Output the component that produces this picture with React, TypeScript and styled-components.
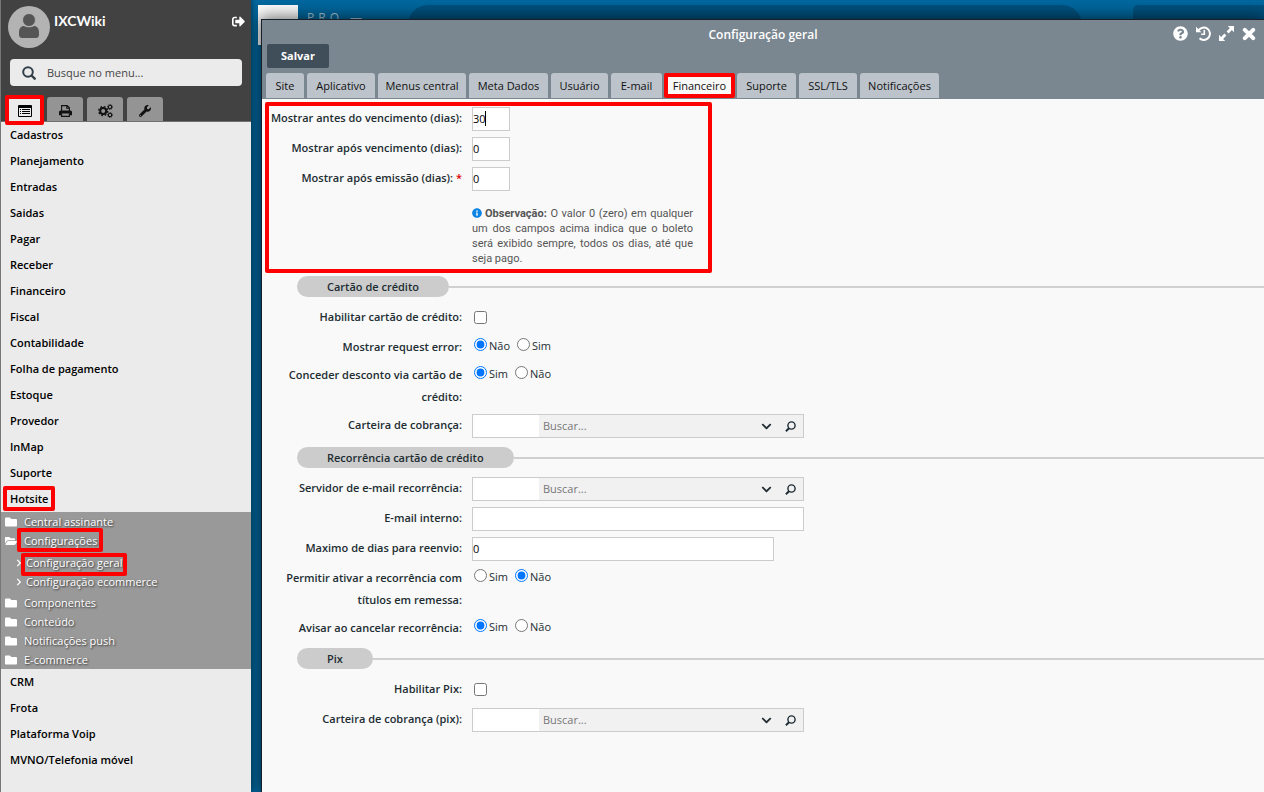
import React from "react";
import styled, { createGlobalStyle, css } from "styled-components";
import {
  FaChevronDown,
  FaChevronRight,
  FaFolder,
  FaFolderOpen,
  FaInfoCircle,
  FaQuestionCircle,
  FaSignOutAlt,
  FaWrench,
} from "react-icons/fa";

const GlobalStyle = createGlobalStyle`
  *, *::before, *::after { box-sizing: border-box; }
  body { margin: 0; font-family: "Open Sans", "Noto Sans", sans-serif; font-size: 11px; color: #222d32; }
  button, input { font: inherit; color: inherit; }
  button { border: 0; padding: 0; background: none; cursor: pointer; }
  ul { list-style: none; margin: 0; padding: 0; }
  a { color: inherit; text-decoration: none; }
  svg { display: block; }
`;

const Shell = styled.div`
  display: flex;
  min-height: 100vh;
`;

/* Red annotation frame laid over the marked part */
const frame = css`
  content: "";
  position: absolute;
  border: 4px solid #fe0000;
  border-radius: 2px;
  pointer-events: none;
  z-index: 2;
`;

/* Sidebar */
const Sidebar = styled.aside`
  flex: 0 0 251px;
  background: #ebebeb;
  border-left: 1px solid #777;
  box-shadow: 0 0 6px rgba(0, 0, 0, 0.6);
  z-index: 1;
`;

const SideHeader = styled.header`
  padding: 6px 6px 0;
  background: #424242;
  border-bottom: 1px solid #707070;
`;

const Profile = styled.div`
  display: flex;
  gap: 4px;
  height: 42px;
  padding-left: 1px;
`;

const UserName = styled.strong`
  flex: 1;
  font: 700 14px/30px Lato, sans-serif;
  color: #fff;
`;

const LogoutButton = styled.button`
  align-self: flex-start;
  height: 30px;
  color: #fff;
  font-size: 13px;
`;

const MenuSearch = styled.label`
  display: flex;
  align-items: center;
  gap: 11px;
  height: 27px;
  margin: 11px 3px;
  padding: 0 12px;
  border-radius: 4px;
  background: #ebebeb;
`;

const MenuSearchInput = styled.input`
  flex: 1;
  min-width: 0;
  border: 0;
  padding: 0;
  background: none;
  outline: none;
  &::placeholder { color: #444; opacity: 1; }
`;

const IconTabs = styled.div`
  display: flex;
  gap: 4px;
`;

const IconTab = styled.button<{ $active?: boolean }>`
  position: relative;
  display: grid;
  place-items: center;
  width: 36px;
  height: 24px;
  padding-top: 4px;
  border-radius: 3px 3px 0 0;
  background: ${(p) => (p.$active ? "#ebebeb" : "#949494")};
  color: #111;
  font-size: 12px;
  ${(p) => p.$active && css`&::after { ${frame} inset: -2px -1px -4px -2px; }`}
`;

const MenuLink = styled.a`
  display: block;
  padding-left: 9px;
  font-weight: 600;
  line-height: 26px;
  color: #000;
`;

const Marked = styled.span<{ $inset: string }>`
  position: relative;
  &::after { ${frame} inset: ${(p) => p.$inset}; }
`;

const SubMenu = styled.ul`
  background: #999;
  color: #fff;
  text-shadow: 1px 1px 2px rgba(0, 0, 0, 0.7);
  line-height: 19px;
`;

const NestedMenu = styled.ul`
  margin: 3px 0 2px;
`;

const FolderLink = styled.a`
  display: flex;
  align-items: center;
  gap: 7px;
  padding-left: 4px;
  svg { font-size: 12px; }
`;

const LeafLink = styled.a`
  display: flex;
  align-items: center;
  gap: 3px;
  padding-left: 14px;
  svg { font-size: 8px; }
`;

/* Desktop behind the window */
const Desktop = styled.main`
  position: relative;
  flex: 1;
  min-width: 0;
  display: flex;
  padding: 19px 0 0 10px;
  background: #00689f;
`;

const Backdrop = styled.div`
  position: absolute;
  inset: 5px 0 0 7px;
  display: flex;
  align-items: flex-start;
`;

const BrandTile = styled.div`
  width: 40px;
  height: 40px;
  background: #fff;
`;

const BrandText = styled.span`
  flex: 0 0 101px;
  margin-left: 9px;
  font-size: 12px;
  line-height: 26px;
  letter-spacing: 4px;
  color: #a9cadb;
`;

const BackdropBar = styled.div`
  flex: 1;
  height: 40px;
  margin-right: 51px;
  border-radius: 20px;
  background: #005280;
`;

const BackdropCard = styled.div`
  flex: 0 0 131px;
  height: 60px;
  border-radius: 5px 0 0 0;
  background: #005280;
`;

/* Window */
const Window = styled.section`
  position: relative;
  flex: 1;
  min-width: 0;
  display: flex;
  flex-direction: column;
  border: solid #17202a;
  border-width: 1px 0 0 1px;
  background: #f9f9f9;
  box-shadow: 0 0 16px 2px rgba(0, 0, 0, 0.6);
`;

const WindowHeader = styled.header`
  background: #7a8791;
  padding: 0 4px;
`;

const TitleBar = styled.div`
  display: grid;
  grid-template-columns: 1fr auto 1fr;
  align-items: center;
  height: 24px;
  color: #fff;
`;

const Title = styled.h1`
  grid-column: 2;
  margin: 0;
  padding-top: 5px;
  font-size: 12px;
  font-weight: 600;
`;

const WindowActions = styled.div`
  display: flex;
  justify-content: flex-end;
  gap: 8px;
  padding: 3px 4px 0 0;
  font-size: 15px;
`;

const SaveButton = styled.button`
  display: block;
  width: 62px;
  height: 24px;
  margin: 0 0 5px 1px;
  padding-bottom: 1px;
  border-radius: 2px;
  background: #3f4e58;
  color: #fff;
  font-weight: 700;
`;

const Tabs = styled.nav`
  display: flex;
  gap: 3px;
  padding-bottom: 1px;
`;

const Tab = styled.button<{ $width: number; $active?: boolean }>`
  position: relative;
  width: ${(p) => p.$width}px;
  height: 25px;
  border-radius: 3px 3px 0 0;
  background: ${(p) => (p.$active ? "#f9f9f9" : "#bcc3ca")};
  color: #111;
  white-space: nowrap;
  ${(p) => p.$active && css`&::after { ${frame} inset: 0 -1px; }`}
`;

/* Form */
const Form = styled.form`
  padding-top: 8px;
`;

const MarkedGroup = styled.div`
  position: relative;
  &::after { ${frame} top: -5px; bottom: 0; left: 3px; width: 447px; }
`;

const Row = styled.div`
  display: grid;
  grid-template-columns: 200px 1fr;
  column-gap: 10px;
  align-items: start;
  margin-bottom: 6px;
`;

const FieldLabel = styled.label`
  font-weight: 600;
  line-height: 22px;
  text-align: right;
`;

const Required = styled.span`
  color: #e00000;
`;

const TextInput = styled.input<{ $width: number }>`
  display: block;
  width: ${(p) => p.$width}px;
  max-width: 100%;
  height: 24px;
  padding: 0 0 2px;
  border: 1px solid #ccc;
  border-radius: 0;
  background: #fff;
  color: #000;
`;

const CaretField = styled.div`
  position: relative;
  &::after {
    content: "";
    position: absolute;
    left: 13px;
    top: 4px;
    width: 1px;
    height: 15px;
    background: #000;
  }
`;

const CheckCell = styled.div`
  height: 24px;
  padding: 5px 0 0 2px;
  input { display: block; width: 13px; height: 13px; margin: 0; }
`;

const RadioCell = styled.div`
  display: flex;
  gap: 7px;
  padding-left: 2px;
`;

const RadioLabel = styled.label`
  display: flex;
  gap: 2px;
  line-height: 20px;
  input { width: 13px; height: 13px; margin: 2px 0 0; }
`;

const Note = styled.div`
  width: 221px;
  box-sizing: content-box;
  margin-left: 210px;
  padding: 9px 0 7px;
  font-family: Roboto, sans-serif;
  line-height: 15px;
  text-align: justify;
  color: #555;
  svg { display: inline-block; margin-right: 3px; color: #0c84e4; font-size: 10px; vertical-align: -1px; }
  strong { font-weight: 700; }
`;

const Section = styled.h2`
  display: flex;
  align-items: center;
  margin: 0 0 9px 35px;
  padding-top: 3px;
  font-size: 11px;
  font-weight: 600;
  line-height: 21px;
  &::after { content: ""; flex: 1; height: 2px; background: #d0d0d0; }
  span { padding: 0 30px; border-radius: 11px; background: #ccc; }
`;

const LookupBox = styled.div`
  display: flex;
  align-items: center;
  width: 332px;
  max-width: 100%;
  height: 24px;
  border: 1px solid #ccc;
  background: #f1f1f1;
`;

const LookupCode = styled.input`
  width: 66px;
  height: 22px;
  border: 0;
  background: #fff;
`;

const LookupText = styled.input`
  flex: 1;
  min-width: 0;
  height: 22px;
  padding: 0 4px 2px;
  border: 0;
  background: none;
  &::placeholder { color: #777; opacity: 1; }
`;

const LookupButton = styled.button`
  display: grid;
  place-items: center;
  width: 24px;
  height: 22px;
  font-size: 11px;
  &:last-child { margin-right: 1px; }
`;

const ListIcon = () => (
  <svg width="14" height="12" viewBox="0 0 14 12">
    <path d="M1 0h12a1 1 0 0 1 1 1v10a1 1 0 0 1-1 1H1a1 1 0 0 1-1-1V1a1 1 0 0 1 1-1zM1 3v8h12V3z" fill="#000" fillRule="evenodd" />
    <path d="M2 4h1v1H2zM4 4h8v1H4zM2 6h1v1H2zM4 6h8v1H4zM2 8h1v1H2zM4 8h8v1H4z" fill="#000" />
  </svg>
);

const PrintIcon = () => (
  <svg width="13" height="12" viewBox="0 0 13 12">
    <path d="M2.600 6V.6h5.600L10.400 2.800V6M7.800 .6v2.600h2.600" fill="none" stroke="#111" strokeWidth="1.100" />
    <path d="M1.500 5.500h10A1.500 1.500 0 0 1 13 7v3.200h-2.400V8.500H2.400v1.700H0V7A1.500 1.500 0 0 1 1.500 5.500z" fill="#111" />
    <path d="M2.600 8.500v2.900h7.800V8.500" fill="none" stroke="#111" strokeWidth="1.100" />
  </svg>
);

const GearsIcon = () => (
  <svg width="15" height="14" viewBox="0 0 15 14" fill="none" stroke="#111">
    <circle cx="5.200" cy="7" r="3" strokeWidth="2" />
    <circle cx="5.200" cy="7" r="4.400" strokeWidth="1.500" strokeDasharray="1.800 1.656" />
    <circle cx="12" cy="3" r="1.700" strokeWidth="1.100" />
    <circle cx="12" cy="3" r="2.500" strokeWidth=".8" strokeDasharray="1 .963" />
    <circle cx="12" cy="11" r="1.700" strokeWidth="1.100" />
    <circle cx="12" cy="11" r="2.500" strokeWidth=".8" strokeDasharray="1 .963" />
  </svg>
);

const SearchIcon = () => (
  <svg width="14" height="14" viewBox="0 0 14 14" fill="none" stroke="#333f48">
    <circle cx="6" cy="6" r="4.800" strokeWidth="2" />
    <path d="M9.500 9.500l3.200 3.200" strokeWidth="2.400" strokeLinecap="round" />
  </svg>
);

const LookupIcon = () => (
  <svg width="11" height="11" viewBox="0 0 11 11" fill="none" stroke="#1b2a33">
    <circle cx="6.500" cy="4.500" r="3.600" strokeWidth="1.400" />
    <path d="M4 7.200L.9 10.200" strokeWidth="1.900" />
  </svg>
);

const HistoryIcon = () => (
  <svg width="15" height="15" viewBox="0 0 15 15" fill="none" stroke="#fff">
    <path d="M2.600 4.300A6.200 6.200 0 1 1 3.500 12.300" strokeWidth="2" />
    <path d="M0 .8v5.400h5.400z" fill="#fff" stroke="none" />
    <path d="M8.300 4v4.200H5.200" strokeWidth="1.600" />
  </svg>
);

const ExpandIcon = () => (
  <svg width="15" height="15" viewBox="0 0 15 15">
    <path d="M8.800 0H15v6.200L12.900 4.100 9.600 7.400 7.600 5.400 10.900 2.100zM6.200 15H0V8.800l2.100 2.100 3.300-3.300 2 2-3.300 3.300z" fill="#fff" />
  </svg>
);

const CloseIcon = () => (
  <svg width="14" height="14" viewBox="0 0 14 14">
    <path d="M2.800 2.800l8.400 8.400M11.200 2.800l-8.400 8.400" stroke="#fff" strokeWidth="4" strokeLinecap="round" />
  </svg>
);

const Avatar = () => (
  <svg width="42" height="42" viewBox="0 0 42 42">
    <circle cx="21" cy="21" r="21" fill="#b3b3b3" />
    <path d="M11 27c0-5 2-7 5-7 2 1.700 8 1.700 10 0 3 0 5 2 5 7v2c0 2-1.500 3-3 3H14c-1.500 0-3-1-3-3z" fill="#555" />
    <circle cx="21" cy="14" r="6.500" fill="#555" stroke="#b3b3b3" />
  </svg>
);

type LabelProps = { id: string; label: React.ReactNode };

const LookupRow = ({ id, label }: LabelProps) => (
  <Row>
    <FieldLabel htmlFor={id}>{label}</FieldLabel>
    <LookupBox>
      <LookupCode aria-label="Código" />
      <LookupText id={id} placeholder="Buscar..." />
      <LookupButton type="button" aria-label="Abrir lista"><FaChevronDown /></LookupButton>
      <LookupButton type="button" aria-label="Pesquisar"><LookupIcon /></LookupButton>
    </LookupBox>
  </Row>
);

const TextRow = ({ id, label, value, width, caret }: LabelProps & { value?: string; width: number; caret?: boolean }) => {
  const input = <TextInput id={id} defaultValue={value} $width={width} />;
  return (
    <Row>
      <FieldLabel htmlFor={id}>{label}</FieldLabel>
      {caret ? <CaretField>{input}</CaretField> : input}
    </Row>
  );
};

const CheckRow = ({ id, label }: LabelProps) => (
  <Row>
    <FieldLabel htmlFor={id}>{label}</FieldLabel>
    <CheckCell><input id={id} type="checkbox" /></CheckCell>
  </Row>
);

const RadioRow = ({ id, label, options, value }: LabelProps & { options: string[]; value: string }) => (
  <Row role="radiogroup" aria-labelledby={id}>
    <FieldLabel as="span" id={id}>{label}</FieldLabel>
    <RadioCell>
      {options.map((o) => (
        <RadioLabel key={o}>
          <input type="radio" name={id} defaultChecked={o === value} />
          {o}
        </RadioLabel>
      ))}
    </RadioCell>
  </Row>
);

const menuTop = [
  "Cadastros", "Planejamento", "Entradas", "Saidas", "Pagar", "Receber", "Financeiro", "Fiscal",
  "Contabilidade", "Folha de pagamento", "Estoque", "Provedor", "InMap", "Suporte",
];
const menuBottom = ["CRM", "Frota", "Plataforma Voip", "MVNO/Telefonia móvel"];
const folders = ["Componentes", "Conteúdo", "Notificações push", "E-commerce"];
const tabs: [string, number][] = [
  ["Site", 38], ["Aplicativo", 68], ["Menus central", 88], ["Meta Dados", 79], ["Usuário", 57],
  ["E-mail", 51], ["Financeiro", 69], ["Suporte", 59], ["SSL/TLS", 58], ["Notificações", 79],
];

const App = () => (
  <Shell>
    <GlobalStyle />
    <Sidebar>
      <SideHeader>
        <Profile>
          <Avatar />
          <UserName>IXCWiki</UserName>
          <LogoutButton aria-label="Sair"><FaSignOutAlt /></LogoutButton>
        </Profile>
        <MenuSearch>
          <SearchIcon />
          <MenuSearchInput placeholder="Busque no menu..." aria-label="Busque no menu" />
        </MenuSearch>
        <IconTabs>
          <IconTab $active aria-label="Menu"><ListIcon /></IconTab>
          <IconTab aria-label="Relatórios"><PrintIcon /></IconTab>
          <IconTab aria-label="Configurações"><GearsIcon /></IconTab>
          <IconTab aria-label="Ferramentas"><FaWrench /></IconTab>
        </IconTabs>
      </SideHeader>
      <nav>
        <ul>
          {menuTop.map((m) => <li key={m}><MenuLink href="#">{m}</MenuLink></li>)}
          <li>
            <MenuLink href="#"><Marked $inset="-5px -7px">Hotsite</Marked></MenuLink>
            <SubMenu>
              <li><FolderLink href="#"><FaFolder />Central assinante</FolderLink></li>
              <li>
                <FolderLink href="#"><FaFolderOpen /><Marked $inset="-3px -6px -2px -7px">Configurações</Marked></FolderLink>
                <NestedMenu>
                  <li><LeafLink href="#"><FaChevronRight /><Marked $inset="0 -4px -4px -5px">Configuração geral</Marked></LeafLink></li>
                  <li><LeafLink href="#"><FaChevronRight />Configuração ecommerce</LeafLink></li>
                </NestedMenu>
              </li>
              {folders.map((f) => <li key={f}><FolderLink href="#"><FaFolder />{f}</FolderLink></li>)}
            </SubMenu>
          </li>
          {menuBottom.map((m) => <li key={m}><MenuLink href="#">{m}</MenuLink></li>)}
        </ul>
      </nav>
    </Sidebar>
    <Desktop>
      <Backdrop>
        <BrandTile />
        <BrandText>PRO —</BrandText>
        <BackdropBar />
        <BackdropCard />
      </Backdrop>
      <Window>
        <WindowHeader>
          <TitleBar>
            <Title>Configuração geral</Title>
            <WindowActions>
              <button aria-label="Ajuda"><FaQuestionCircle /></button>
              <button aria-label="Histórico"><HistoryIcon /></button>
              <button aria-label="Expandir"><ExpandIcon /></button>
              <button aria-label="Fechar"><CloseIcon /></button>
            </WindowActions>
          </TitleBar>
          <SaveButton>Salvar</SaveButton>
          <Tabs>
            {tabs.map(([t, w]) => <Tab key={t} $width={w} $active={t === "Financeiro"}>{t}</Tab>)}
          </Tabs>
        </WindowHeader>
        <Form>
          <MarkedGroup>
            <TextRow id="antes" label="Mostrar antes do vencimento (dias):" value="30" width={38} caret />
            <TextRow id="apos" label="Mostrar após vencimento (dias):" value="0" width={38} />
            <TextRow id="emissao" label={<>Mostrar após emissão (dias): <Required>*</Required></>} value="0" width={38} />
            <Note>
              <FaInfoCircle /><strong>Observação:</strong> O valor 0 (zero) em qualquer um dos campos acima indica
              que o boleto será exibido sempre, todos os dias, até que seja pago.
            </Note>
          </MarkedGroup>
          <Section><span>Cartão de crédito</span></Section>
          <CheckRow id="cartao" label="Habilitar cartão de crédito:" />
          <RadioRow id="erro" label="Mostrar request error:" options={["Não", "Sim"]} value="Não" />
          <RadioRow id="desconto" label="Conceder desconto via cartão de crédito:" options={["Sim", "Não"]} value="Sim" />
          <LookupRow id="carteira" label="Carteira de cobrança:" />
          <Section><span>Recorrência cartão de crédito</span></Section>
          <LookupRow id="servidor" label="Servidor de e-mail recorrência:" />
          <TextRow id="interno" label="E-mail interno:" width={332} />
          <TextRow id="reenvio" label="Maximo de dias para reenvio:" value="0" width={302} />
          <RadioRow id="remessa" label="Permitir ativar a recorrência com títulos em remessa:" options={["Sim", "Não"]} value="Não" />
          <RadioRow id="avisar" label="Avisar ao cancelar recorrência:" options={["Sim", "Não"]} value="Sim" />
          <Section><span>Pix</span></Section>
          <CheckRow id="pix" label="Habilitar Pix:" />
          <LookupRow id="carteirapix" label="Carteira de cobrança (pix):" />
        </Form>
      </Window>
    </Desktop>
  </Shell>
);

export default App;
